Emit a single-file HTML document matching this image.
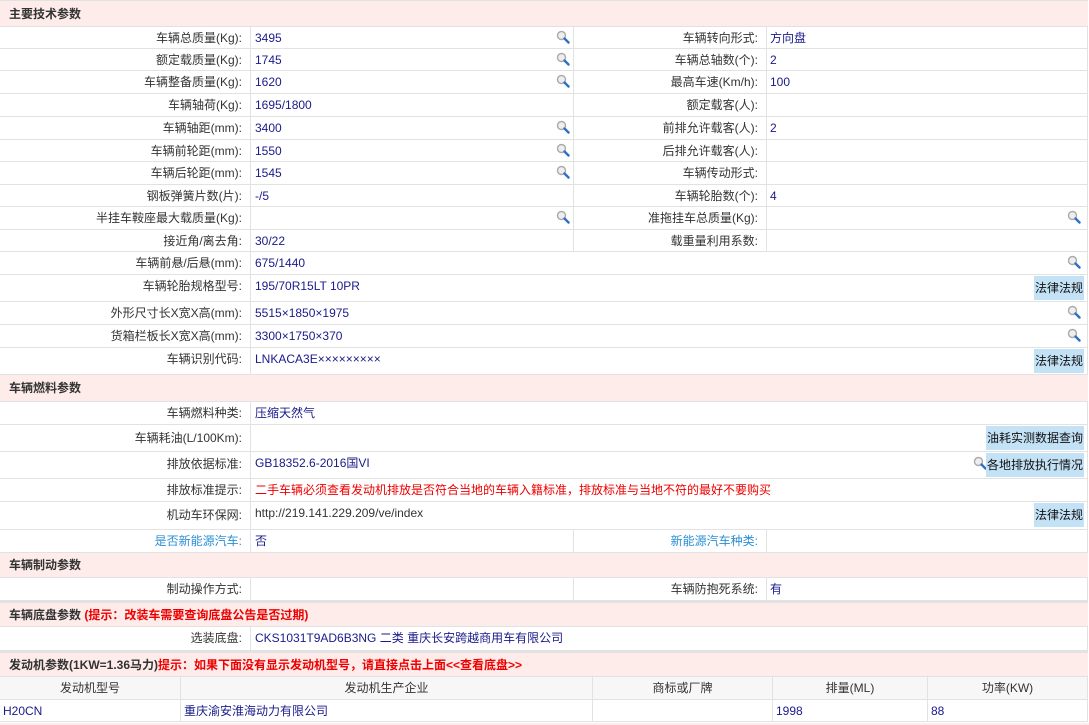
<!DOCTYPE html><html><head><meta charset="utf-8"><style>
*{margin:0;padding:0;box-sizing:border-box}
body{width:1089px;height:725px;background:#fff;font-family:"Liberation Sans","Noto Sans CJK SC",sans-serif;font-size:12px;color:#333;position:relative;overflow:hidden}
.r{position:absolute;left:0;width:1088px;border-bottom:1px solid #e2e2e2}
.c{position:absolute;top:0;bottom:0;line-height:22px;white-space:nowrap}
.l{left:0;width:250px;text-align:right;padding-right:8px}
.v{left:250px;width:323px;border-left:1px solid #e2e2e2;padding-left:4px;color:#1a1a8a}
.l2{left:573px;width:193px;border-left:1px solid #e2e2e2;text-align:right;padding-right:8px}
.v2{left:766px;width:322px;border-left:1px solid #e2e2e2;border-right:1px solid #e2e2e2;padding-left:3px;color:#1a1a8a}
.vf{left:250px;width:838px;border-left:1px solid #e2e2e2;border-right:1px solid #e2e2e2;padding-left:4px;color:#1a1a8a}
.h{background:#fdecea;font-weight:bold;padding-left:9px;color:#333}
.h .c{line-height:26px}
.ic{position:absolute;width:14px;height:14px}
.btn{position:absolute;right:3px;top:1px;height:24px;line-height:24px;background:#c4e2f6;color:#111;padding:0 1px}
.red{color:#e00}
.blue{color:#2b8fd6}
.e{position:absolute;top:0;bottom:0;border-left:1px solid #e2e2e2;line-height:22px;white-space:nowrap}
</style></head><body>
<svg width="0" height="0" style="position:absolute"><defs><symbol id="m" viewBox="0 0 14 14"><circle cx="5.5" cy="5.5" r="4" fill="#eee" stroke="#aaa" stroke-width="1.4"/><path d="M8.5 8.5L12.5 12.5" stroke="#2f6fc8" stroke-width="2.4" stroke-linecap="round"/></symbol></defs></svg>

<div class="r h" style="top:0;height:27px;border-top:1px solid #e2e2e2"><div class="c" style="line-height:26px">主要技术参数</div></div>

<div class="r" style="top:27px;height:22px"><div class="c l">车辆总质量(Kg):</div><div class="c v">3495<svg class="ic" style="left:305px;top:3px"><use href="#m"/></svg></div><div class="c l2">车辆转向形式:</div><div class="c v2">方向盘</div></div>
<div class="r" style="top:49px;height:22px"><div class="c l">额定载质量(Kg):</div><div class="c v">1745<svg class="ic" style="left:305px;top:3px"><use href="#m"/></svg></div><div class="c l2">车辆总轴数(个):</div><div class="c v2">2</div></div>
<div class="r" style="top:71px;height:23px"><div class="c l">车辆整备质量(Kg):</div><div class="c v">1620<svg class="ic" style="left:305px;top:3px"><use href="#m"/></svg></div><div class="c l2">最高车速(Km/h):</div><div class="c v2">100</div></div>
<div class="r" style="top:94px;height:23px"><div class="c l">车辆轴荷(Kg):</div><div class="c v">1695/1800</div><div class="c l2">额定载客(人):</div><div class="c v2"></div></div>
<div class="r" style="top:117px;height:23px"><div class="c l">车辆轴距(mm):</div><div class="c v">3400<svg class="ic" style="left:305px;top:3px"><use href="#m"/></svg></div><div class="c l2">前排允许载客(人):</div><div class="c v2">2</div></div>
<div class="r" style="top:140px;height:22px"><div class="c l">车辆前轮距(mm):</div><div class="c v">1550<svg class="ic" style="left:305px;top:3px"><use href="#m"/></svg></div><div class="c l2">后排允许载客(人):</div><div class="c v2"></div></div>
<div class="r" style="top:162px;height:23px"><div class="c l">车辆后轮距(mm):</div><div class="c v">1545<svg class="ic" style="left:305px;top:3px"><use href="#m"/></svg></div><div class="c l2">车辆传动形式:</div><div class="c v2"></div></div>
<div class="r" style="top:185px;height:22px"><div class="c l">钢板弹簧片数(片):</div><div class="c v">-/5</div><div class="c l2">车辆轮胎数(个):</div><div class="c v2">4</div></div>
<div class="r" style="top:207px;height:23px"><div class="c l">半挂车鞍座最大载质量(Kg):</div><div class="c v"><svg class="ic" style="left:305px;top:3px"><use href="#m"/></svg></div><div class="c l2">准拖挂车总质量(Kg):</div><div class="c v2"><svg class="ic" style="left:300px;top:3px"><use href="#m"/></svg></div></div>
<div class="r" style="top:230px;height:22px"><div class="c l">接近角/离去角:</div><div class="c v">30/22</div><div class="c l2">载重量利用系数:</div><div class="c v2"></div></div>
<div class="r" style="top:252px;height:23px"><div class="c l">车辆前悬/后悬(mm):</div><div class="c vf">675/1440<svg class="ic" style="left:816px;top:3px"><use href="#m"/></svg></div></div>
<div class="r" style="top:275px;height:27px"><div class="c l">车辆轮胎规格型号:</div><div class="c vf">195/70R15LT 10PR<span class="btn">法律法规</span></div></div>
<div class="r" style="top:302px;height:23px"><div class="c l">外形尺寸长X宽X高(mm):</div><div class="c vf">5515×1850×1975<svg class="ic" style="left:816px;top:3px"><use href="#m"/></svg></div></div>
<div class="r" style="top:325px;height:23px"><div class="c l">货箱栏板长X宽X高(mm):</div><div class="c vf">3300×1750×370<svg class="ic" style="left:816px;top:3px"><use href="#m"/></svg></div></div>
<div class="r" style="top:348px;height:27px"><div class="c l">车辆识别代码:</div><div class="c vf">LNKACA3E×××××××××<span class="btn">法律法规</span></div></div>

<div class="r h" style="top:375px;height:27px"><div class="c">车辆燃料参数</div></div>
<div class="r" style="top:402px;height:23px"><div class="c l">车辆燃料种类:</div><div class="c vf">压缩天然气</div></div>
<div class="r" style="top:425px;height:27px"><div class="c l" style="line-height:26px">车辆耗油(L/100Km):</div><div class="c vf"><span class="btn">油耗实测数据查询</span></div></div>
<div class="r" style="top:452px;height:27px"><div class="c l" style="line-height:24px">排放依据标准:</div><div class="c vf">GB18352.6-2016国VI<svg class="ic" style="left:722px;top:4px"><use href="#m"/></svg><span class="btn">各地排放执行情况</span></div></div>
<div class="r" style="top:479px;height:23px"><div class="c l">排放标准提示:</div><div class="c vf red">二手车辆必须查看发动机排放是否符合当地的车辆入籍标准，排放标准与当地不符的最好不要购买</div></div>
<div class="r" style="top:502px;height:28px"><div class="c l" style="line-height:26px">机动车环保网:</div><div class="c vf" style="color:#333;line-height:22px">http://219.141.229.209/ve/index<span class="btn">法律法规</span></div></div>
<div class="r" style="top:530px;height:23px"><div class="c l blue">是否新能源汽车:</div><div class="c v">否</div><div class="c l2 blue">新能源汽车种类:</div><div class="c v2"></div></div>

<div class="r h" style="top:553px;height:25px"><div class="c" style="line-height:24px">车辆制动参数</div></div>
<div class="r" style="top:578px;height:23px"><div class="c l">制动操作方式:</div><div class="c v"></div><div class="c l2">车辆防抱死系统:</div><div class="c v2">有</div></div>

<div class="r h" style="top:601px;height:26px;border-top:2px solid #e2e2e2"><div class="c" style="line-height:24px">车辆底盘参数 <span class="red">(提示：改装车需要查询底盘公告是否过期)</span></div></div>
<div class="r" style="top:627px;height:24px"><div class="c l">选装底盘:</div><div class="c vf">CKS1031T9AD6B3NG 二类 重庆长安跨越商用车有限公司</div></div>

<div class="r h" style="top:651px;height:26px;border-top:2px solid #e2e2e2"><div class="c" style="line-height:24px">发动机参数(1KW=1.36马力)<span class="red">提示：如果下面没有显示发动机型号，请直接点击上面&lt;&lt;查看底盘&gt;&gt;</span></div></div>
<div class="r" style="top:677px;height:23px;background:#f7f7f7;text-align:center"><div class="e" style="left:0;width:180px;border-left:0">发动机型号</div><div class="e" style="left:180px;width:412px">发动机生产企业</div><div class="e" style="left:592px;width:180px">商标或厂牌</div><div class="e" style="left:772px;width:155px">排量(ML)</div><div class="e" style="left:927px;width:161px;border-right:1px solid #e2e2e2">功率(KW)</div></div>
<div class="r" style="top:700px;height:22px;color:#1a1a8a"><div class="e" style="left:0;width:180px;border-left:0;padding-left:3px">H20CN</div><div class="e" style="left:180px;width:412px;padding-left:3px">重庆渝安淮海动力有限公司</div><div class="e" style="left:592px;width:180px"></div><div class="e" style="left:772px;width:155px;padding-left:3px">1998</div><div class="e" style="left:927px;width:161px;padding-left:3px;border-right:1px solid #e2e2e2">88</div></div>
<div style="position:absolute;top:723px;left:0;width:1089px;height:2px;background:#fdecea"></div>
</body></html>
